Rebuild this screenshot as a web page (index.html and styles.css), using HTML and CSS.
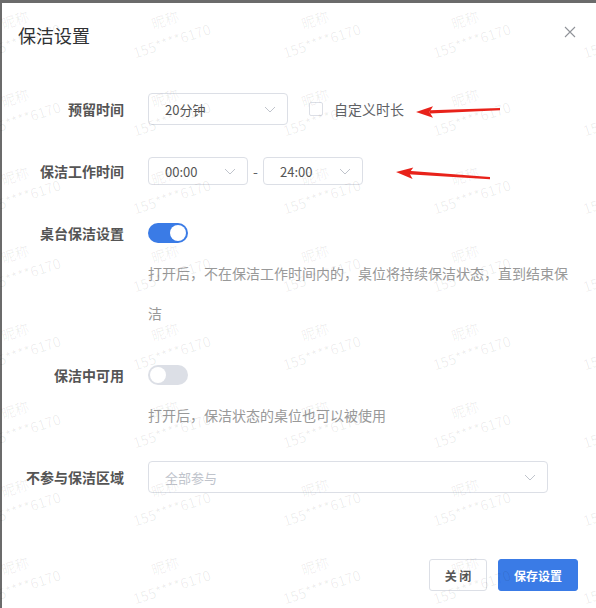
FILE: index.html
```html
<!DOCTYPE html>
<html lang="zh-CN">
<head>
<meta charset="utf-8">
<title>保洁设置</title>
<link rel="stylesheet" href="styles.css">
</head>
<body>
<div class="dialog">
  <div class="header">
    <span class="title">保洁设置</span>
    <button class="close" aria-label="关闭">
      <svg width="12" height="12" viewBox="0 0 12 12"><path d="M1 1L11 11M11 1L1 11" stroke="#909399" stroke-width="1.1" fill="none"/></svg>
    </button>
  </div>

  <div class="form">
    <div class="item">
      <div class="label">预留时间</div>
      <div class="content">
        <div class="line">
          <div class="select sel-140">
            <span class="val">20分钟</span>
            <svg class="arrow" width="12" height="7" viewBox="0 0 12 7"><path d="M1 1L6 6L11 1" stroke="#c0c4cc" stroke-width="1" fill="none"/></svg>
          </div>
          <label class="checkbox"><span class="box"></span><span class="cb-text">自定义时长</span></label>
        </div>
      </div>
    </div>

    <div class="item">
      <div class="label">保洁工作时间</div>
      <div class="content">
        <div class="line">
          <div class="select sel-time">
            <span class="val">00:00</span>
            <svg class="arrow" width="12" height="7" viewBox="0 0 12 7"><path d="M1 1L6 6L11 1" stroke="#c0c4cc" stroke-width="1" fill="none"/></svg>
          </div>
          <span class="dash">-</span>
          <div class="select sel-time">
            <span class="val">24:00</span>
            <svg class="arrow" width="12" height="7" viewBox="0 0 12 7"><path d="M1 1L6 6L11 1" stroke="#c0c4cc" stroke-width="1" fill="none"/></svg>
          </div>
        </div>
      </div>
    </div>

    <div class="item">
      <div class="label">桌台保洁设置</div>
      <div class="content">
        <div class="line"><span class="switch on"><span class="knob"></span></span></div>
        <p class="desc">打开后，不在保洁工作时间内的，桌位将持续保洁状态，直到结束保洁</p>
      </div>
    </div>

    <div class="item">
      <div class="label">保洁中可用</div>
      <div class="content">
        <div class="line"><span class="switch"><span class="knob"></span></span></div>
        <p class="desc">打开后，保洁状态的桌位也可以被使用</p>
      </div>
    </div>

    <div class="item">
      <div class="label">不参与保洁区域</div>
      <div class="content">
        <div class="line">
          <div class="select sel-wide">
            <span class="val placeholder">全部参与</span>
            <svg class="arrow" width="12" height="7" viewBox="0 0 12 7"><path d="M1 1L6 6L11 1" stroke="#c0c4cc" stroke-width="1" fill="none"/></svg>
          </div>
        </div>
      </div>
    </div>
  </div>

  <div class="footer">
    <button class="btn">关 闭</button>
    <button class="btn primary">保存设置</button>
  </div>
</div>

<div class="watermark" aria-hidden="true">
  <div class="wm"><span>昵称<br>155****6170</span></div><div class="wm"><span>昵称<br>155****6170</span></div><div class="wm"><span>昵称<br>155****6170</span></div><div class="wm"><span>昵称<br>155****6170</span></div><div class="wm"><span>昵称<br>155****6170</span></div>
  <div class="wm"><span>昵称<br>155****6170</span></div><div class="wm"><span>昵称<br>155****6170</span></div><div class="wm"><span>昵称<br>155****6170</span></div><div class="wm"><span>昵称<br>155****6170</span></div><div class="wm"><span>昵称<br>155****6170</span></div>
  <div class="wm"><span>昵称<br>155****6170</span></div><div class="wm"><span>昵称<br>155****6170</span></div><div class="wm"><span>昵称<br>155****6170</span></div><div class="wm"><span>昵称<br>155****6170</span></div><div class="wm"><span>昵称<br>155****6170</span></div>
  <div class="wm"><span>昵称<br>155****6170</span></div><div class="wm"><span>昵称<br>155****6170</span></div><div class="wm"><span>昵称<br>155****6170</span></div><div class="wm"><span>昵称<br>155****6170</span></div><div class="wm"><span>昵称<br>155****6170</span></div>
  <div class="wm"><span>昵称<br>155****6170</span></div><div class="wm"><span>昵称<br>155****6170</span></div><div class="wm"><span>昵称<br>155****6170</span></div><div class="wm"><span>昵称<br>155****6170</span></div><div class="wm"><span>昵称<br>155****6170</span></div>
  <div class="wm"><span>昵称<br>155****6170</span></div><div class="wm"><span>昵称<br>155****6170</span></div><div class="wm"><span>昵称<br>155****6170</span></div><div class="wm"><span>昵称<br>155****6170</span></div><div class="wm"><span>昵称<br>155****6170</span></div>
  <div class="wm"><span>昵称<br>155****6170</span></div><div class="wm"><span>昵称<br>155****6170</span></div><div class="wm"><span>昵称<br>155****6170</span></div><div class="wm"><span>昵称<br>155****6170</span></div><div class="wm"><span>昵称<br>155****6170</span></div>
  <div class="wm"><span>昵称<br>155****6170</span></div><div class="wm"><span>昵称<br>155****6170</span></div><div class="wm"><span>昵称<br>155****6170</span></div><div class="wm"><span>昵称<br>155****6170</span></div><div class="wm"><span>昵称<br>155****6170</span></div>
  <div class="wm"><span>昵称<br>155****6170</span></div><div class="wm"><span>昵称<br>155****6170</span></div><div class="wm"><span>昵称<br>155****6170</span></div><div class="wm"><span>昵称<br>155****6170</span></div><div class="wm"><span>昵称<br>155****6170</span></div>
</div>

<svg class="annot" width="596" height="608" viewBox="0 0 596 608" aria-hidden="true">
  <polygon points="500,108 430,110.2 430,113.6 500,110.2" fill="#e8221a"/>
  <polygon points="416,112 433,106.3 429.5,112 433,117.7" fill="#e8221a"/>
  <polygon points="490,177 408,170.8 408,174.2 490,179.2" fill="#e8221a"/>
  <polygon points="396,172 413.3,167.6 409.3,173 412.6,179" fill="#e8221a"/>
</svg>
</body>
</html>
```
FILE: styles.css
```css
* { box-sizing: border-box; }

html, body {
  margin: 0;
  padding: 0;
}

body {
  position: relative;
  width: 596px;
  height: 608px;
  overflow: hidden;
  background: #6b6b6b;
  font-family: "Noto Sans CJK SC", "Noto Sans", sans-serif;
  color: #606266;
}

.dialog {
  margin: 3px 0 0 2px;
  height: 605px;
  background: #ffffff;
  display: flex;
  flex-direction: column;
}

.header {
  display: flex;
  justify-content: space-between;
  align-items: flex-start;
  padding: 20px 20px 0 16px;
}

.title {
  font-size: 18px;
  line-height: 24px;
  color: #303133;
}

.close {
  border: 0;
  background: none;
  padding: 0;
  margin-top: 3px;
  width: 12px;
  height: 12px;
  display: flex;
}

.form {
  margin-top: 42px;
  padding-right: 20px;
}

.item {
  display: grid;
  grid-template-columns: 146px 1fr;
  margin-bottom: 22px;
}

.item:last-child { margin-bottom: 0; }

.label {
  text-align: right;
  padding-right: 24px;
  font-size: 14px;
  font-weight: 700;
  line-height: 40px;
  color: #555555;
}

.content {
  display: flex;
  flex-direction: column;
}

.line {
  height: 40px;
  display: flex;
  align-items: center;
}

.select {
  height: 32px;
  border: 1px solid #dcdfe6;
  border-radius: 4px;
  display: flex;
  align-items: center;
  justify-content: space-between;
  padding: 0 10px 0 16px;
  background: #fff;
}

.sel-140 { width: 140px; }
.sel-time { width: 100px; height: 28px; }
.sel-wide { width: 400px; }

.val {
  font-size: 13px;
  color: #555555;
}

.val.placeholder { color: #c0c4cc; }

.arrow { margin-right: 1px; }

.checkbox {
  display: flex;
  align-items: center;
  margin-left: 21px;
}

.box {
  width: 14px;
  height: 14px;
  border: 1px solid #dcdfe6;
  border-radius: 2px;
  background: #fff;
}

.cb-text {
  margin-left: 11px;
  font-size: 14px;
  color: #606266;
}

.dash {
  width: 15px;
  text-align: center;
  font-size: 14px;
  color: #606266;
}

.switch {
  position: relative;
  width: 40px;
  height: 20px;
  border-radius: 10px;
  background: #dcdfe6;
  display: inline-block;
}

.switch.on { background: #3a7be6; }

.knob {
  position: absolute;
  top: 2px;
  left: 2px;
  width: 16px;
  height: 16px;
  border-radius: 50%;
  background: #fff;
}

.switch.on .knob { left: 22px; }

.desc {
  margin: 0;
  font-size: 14px;
  line-height: 40px;
  color: #999999;
}

.footer {
  margin-top: 62px;
  display: flex;
  justify-content: flex-end;
  gap: 11px;
  padding-right: 18px;
}

.btn {
  height: 32px;
  border: 1px solid #dcdfe6;
  border-radius: 3px;
  background: #fff;
  font-family: inherit;
  font-size: 12px;
  font-weight: 700;
  color: #555555;
  width: 58px;
  padding: 0;
}

.btn.primary {
  width: 80px;
  background: #3a7be6;
  border-color: #3a7be6;
  color: #ffffff;
}

.watermark {
  position: absolute;
  left: -57px;
  top: -9px;
  display: grid;
  grid-template-columns: repeat(5, 150px);
  grid-auto-rows: 78px;
  pointer-events: none;
}

.wm {
  display: flex;
  align-items: center;
  justify-content: center;
}

.wm span {
  display: block;
  text-align: center;
  font-size: 14px;
  line-height: 22px;
  color: rgba(0, 0, 0, 0.07);
  transform: rotate(-18deg);
  white-space: nowrap;
}

.annot {
  position: absolute;
  left: 0;
  top: 0;
  pointer-events: none;
}
```
